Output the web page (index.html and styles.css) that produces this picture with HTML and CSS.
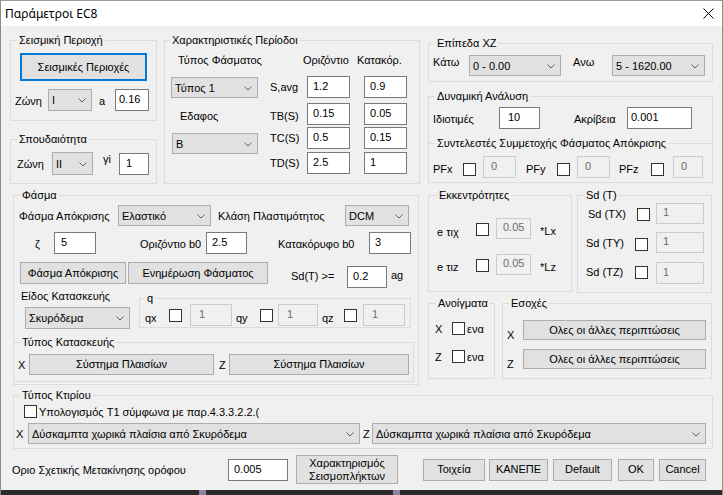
FILE: index.html
```html
<!DOCTYPE html>
<html lang="el">
<head>
<meta charset="utf-8">
<title>Παράμετροι EC8</title>
<link rel="stylesheet" href="styles.css">
</head>
<body>
<div class="window">
  <div class="titlebar">
    <span class="title">Παράμετροι EC8</span>
    <svg class="close" width="11" height="11" viewBox="0 0 11 11"><path d="M0.5 0.5 L10.5 10.5 M10.5 0.5 L0.5 10.5" stroke="#000" stroke-width="1" fill="none"/></svg>
  </div>
  <div class="body">
    <div class="main">
      <div class="left">
        <div class="toprow">
          <div class="colA">
            <div class="group g1">
              <span class="legend">Σεισμική Περιοχή</span>
              <button class="btn seismic">Σεισμικές Περιοχές</button>
              <div class="g1-row">
                <span class="lbl">Ζώνη</span>
                <div class="combo h22"><span>I</span><svg width="8" height="5" viewBox="0 0 8 5"><polyline points="0.5,0.5 4,4 7.5,0.5" fill="none" stroke="#606060"/></svg></div>
                <span class="lbl pl7">a</span>
                <div class="input pl3">0.16</div>
              </div>
            </div>
            <div class="group g2">
              <span class="legend">Σπουδαιότητα</span>
              <div class="g2-row">
                <span class="lbl">Ζώνη</span>
                <div class="combo h23"><span>II</span><svg width="8" height="5" viewBox="0 0 8 5"><polyline points="0.5,0.5 4,4 7.5,0.5" fill="none" stroke="#606060"/></svg></div>
                <span class="lbl gi">γi</span>
                <div class="input h23 pl6">1</div>
              </div>
            </div>
          </div>
          <div class="group g3">
            <span class="legend">Χαρακτηριστικές Περίοδοι</span>
            <div class="g3-left">
              <span class="lbl typos-lbl">Τύπος Φάσματος</span>
              <div class="combo typos-combo"><span>Τύπος 1</span><svg width="8" height="5" viewBox="0 0 8 5"><polyline points="0.5,0.5 4,4 7.5,0.5" fill="none" stroke="#606060"/></svg></div>
              <span class="lbl edafos-lbl">Εδαφος</span>
              <div class="combo edafos-combo"><span>B</span><svg width="8" height="5" viewBox="0 0 8 5"><polyline points="0.5,0.5 4,4 7.5,0.5" fill="none" stroke="#606060"/></svg></div>
            </div>
            <div class="g3-right">
              <div class="g3-head"><span class="h-oriz">Οριζόντιο</span><span>Κατακόρ.</span></div>
              <div class="prow pr1"><span class="lbl">S,avg</span><div class="input">1.2</div><div class="input">0.9</div></div>
              <div class="prow pr2"><span class="lbl">TB(S)</span><div class="input">0.15</div><div class="input">0.05</div></div>
              <div class="prow pr3"><span class="lbl">TC(S)</span><div class="input">0.5</div><div class="input">0.15</div></div>
              <div class="prow pr4"><span class="lbl">TD(S)</span><div class="input">2.5</div><div class="input">1</div></div>
            </div>
          </div>
        </div>
        <div class="group fasma">
          <span class="legend">Φάσμα</span>
          <div class="f-r1">
            <span class="lbl">Φάσμα Απόκρισης</span>
            <div class="combo"><span>Ελαστικό</span><svg width="8" height="5" viewBox="0 0 8 5"><polyline points="0.5,0.5 4,4 7.5,0.5" fill="none" stroke="#606060"/></svg></div>
            <span class="lbl pl7">Κλάση Πλαστιμότητος</span>
            <div class="combo"><span>DCM</span><svg width="8" height="5" viewBox="0 0 8 5"><polyline points="0.5,0.5 4,4 7.5,0.5" fill="none" stroke="#606060"/></svg></div>
          </div>
          <div class="f-r2">
            <span class="lbl zeta">ζ</span>
            <div class="input pl6">5</div>
            <span class="lbl oriz-b0">Οριζόντιο b0</span>
            <div class="input">2.5</div>
            <span class="lbl kat-b0">Κατακόρυφο b0</span>
            <div class="input">3</div>
          </div>
          <div class="f-r3">
            <button class="btn b-fasma">Φάσμα Απόκρισης</button>
            <button class="btn b-enim">Ενημέρωση Φάσματος</button>
            <span class="lbl sd-lbl">Sd(T) &gt;=</span>
            <div class="input sd-in">0.2</div>
            <span class="lbl ag-lbl">ag</span>
          </div>
          <div class="f-r4">
            <div class="f-r4-left">
              <span class="lbl eidos-lbl">Είδος Κατασκευής</span>
              <div class="combo h22 eidos-combo"><span>Σκυρόδεμα</span><svg width="8" height="5" viewBox="0 0 8 5"><polyline points="0.5,0.5 4,4 7.5,0.5" fill="none" stroke="#606060"/></svg></div>
            </div>
            <div class="group qgroup">
              <span class="legend">q</span>
              <div class="q-row">
                <span class="lbl">qx</span>
                <span class="cb"></span>
                <div class="input dis pl8 w42">1</div>
                <span class="lbl pl4">qy</span>
                <span class="cb"></span>
                <div class="input dis pl8 w40">1</div>
                <span class="lbl pl4">qz</span>
                <span class="cb"></span>
                <div class="input dis pl8 w42">1</div>
              </div>
            </div>
          </div>
          <div class="group tk-group">
            <span class="legend">Τύπος Κατασκευής</span>
            <div class="tk-row">
              <span class="lbl">X</span>
              <button class="btn">Σύστημα Πλαισίων</button>
              <span class="lbl pl5">Z</span>
              <button class="btn">Σύστημα Πλαισίων</button>
            </div>
          </div>
        </div>
      </div>

      <div class="right">
        <div class="group epipeda">
          <span class="legend">Επίπεδα XZ</span>
          <div class="ep-row">
            <span class="lbl">Κάτω</span>
            <div class="combo"><span>0 - 0.00</span><svg width="8" height="5" viewBox="0 0 8 5"><polyline points="0.5,0.5 4,4 7.5,0.5" fill="none" stroke="#606060"/></svg></div>
            <span class="lbl anw">Ανω</span>
            <div class="combo"><span>5 - 1620.00</span><svg width="8" height="5" viewBox="0 0 8 5"><polyline points="0.5,0.5 4,4 7.5,0.5" fill="none" stroke="#606060"/></svg></div>
          </div>
        </div>
        <div class="group dyn">
          <span class="legend">Δυναμική Ανάλυση</span>
          <div class="dyn-row">
            <span class="lbl">Ιδιοτιμές</span>
            <div class="input h23 pl8">10</div>
            <span class="lbl akr">Ακρίβεια</span>
            <div class="input h23 pl3">0.001</div>
          </div>
          <div class="group synt">
            <span class="legend">Συντελεστές Συμμετοχής Φάσματος Απόκρισης</span>
            <div class="pf-row">
              <span class="lbl">PFx</span>
              <span class="cb"></span>
              <div class="input dis w33">0</div>
              <span class="lbl pl10">PFy</span>
              <span class="cb"></span>
              <div class="input dis w33">0</div>
              <span class="lbl pl9">PFz</span>
              <span class="cb"></span>
              <div class="input dis w30">0</div>
            </div>
          </div>
        </div>
        <div class="row3">
          <div class="group ekk">
            <span class="legend ekk-legend">Εκκεντρότητες</span>
            <div class="e-row">
              <span class="lbl">e τιχ</span>
              <span class="cb"></span>
              <div class="input dis pl6 w35">0.05</div>
              <span class="lbl star">*Lx</span>
            </div>
            <div class="e-row e-row2">
              <span class="lbl">e τιz</span>
              <span class="cb"></span>
              <div class="input dis pl6 w35">0.05</div>
              <span class="lbl star">*Lz</span>
            </div>
          </div>
          <div class="group sdt">
            <span class="legend">Sd (T)</span>
            <div class="s-row sx">
              <span class="lbl">Sd (TX)</span>
              <span class="cb"></span>
              <div class="input dis pl6 w48">1</div>
            </div>
            <div class="s-row sy">
              <span class="lbl">Sd (TY)</span>
              <span class="cb"></span>
              <div class="input dis pl6 w48">1</div>
            </div>
            <div class="s-row sz">
              <span class="lbl">Sd (TZ)</span>
              <span class="cb"></span>
              <div class="input dis pl6 w48">1</div>
            </div>
          </div>
        </div>
        <div class="row4">
          <div class="group anoig">
            <span class="legend">Ανοίγματα</span>
            <div class="a-row"><span class="lbl ax">X</span><span class="cb"></span><span class="lbl ena">ενα</span></div>
            <div class="a-row a-row2"><span class="lbl ax">Z</span><span class="cb"></span><span class="lbl ena">ενα</span></div>
          </div>
          <div class="group esoxes">
            <span class="legend">Εσοχές</span>
            <div class="es-row"><span class="lbl">X</span><button class="btn">Ολες οι άλλες περιπτώσεις</button></div>
            <div class="es-row es-row2"><span class="lbl">Z</span><button class="btn">Ολες οι άλλες περιπτώσεις</button></div>
          </div>
        </div>
      </div>
    </div>

    <div class="group ktirio">
      <span class="legend">Τύπος Κτιρίου</span>
      <div class="k-r1">
        <span class="cb"></span>
        <span class="lbl k-text">Υπολογισμός T1 σύμφωνα με παρ.4.3.3.2.2.(</span>
      </div>
      <div class="k-r2">
        <span class="lbl">X</span>
        <div class="combo"><span>Δύσκαμπτα χωρικά πλαίσια από Σκυρόδεμα</span><svg width="8" height="5" viewBox="0 0 8 5"><polyline points="0.5,0.5 4,4 7.5,0.5" fill="none" stroke="#606060"/></svg></div>
        <span class="lbl pl3">Z</span>
        <div class="combo"><span>Δύσκαμπτα χωρικά πλαίσια από Σκυρόδεμα</span><svg width="8" height="5" viewBox="0 0 8 5"><polyline points="0.5,0.5 4,4 7.5,0.5" fill="none" stroke="#606060"/></svg></div>
      </div>
    </div>

    <div class="bottom">
      <span class="lbl orio">Οριο Σχετικής Μετακίνησης ορόφου</span>
      <div class="input h23 orio-in">0.005</div>
      <button class="btn b-xar">Χαρακτηρισμός<br>Σεισμοπλήκτων</button>
      <button class="btn b-toix">Τοιχεία</button>
      <button class="btn b-kan">ΚΑΝΕΠΕ</button>
      <button class="btn b-def">Default</button>
      <button class="btn b-ok">OK</button>
      <button class="btn b-can">Cancel</button>
    </div>
  </div>
  <div class="strip"><span class="patch p1"></span><span class="patch p2"></span></div>
</div>
</body>
</html>
```

FILE: styles.css
```css
* { box-sizing: border-box; margin: 0; padding: 0; }
html, body { margin: 0; background: #f0f0f0; }
body {
  font-family: "Liberation Sans", Arial, sans-serif;
  font-size: 11px;
  color: #000;
}
.window {
  width: 723px;
  height: 495px;
  overflow: hidden;
  background: #f0f0f0;
  border-left: 1px solid #8a8a8a;
  border-right: 1px solid #8a8a8a;
  display: flex;
  flex-direction: column;
}
.titlebar {
  flex: none;
  height: 26px;
  background: #fff;
  border-top: 1px solid #9a9a9a;
  display: flex;
  align-items: center;
  justify-content: space-between;
  padding-left: 4px;
}
.title {
  font-family: "Noto Sans", "Open Sans", sans-serif;
  font-size: 12px;
  line-height: 16px;
}
.close { margin-right: 8px; }
.body {
  flex: none;
  height: 464px;
  padding: 14px 9px 0 9px;
}
.strip {
  flex: none;
  height: 5px;
  background: #2b2b2b;
  display: flex;
}
.patch { width: 7px; height: 5px; background: #8a83a0; }
.p1 { margin-left: 198px; }
.p2 { margin-left: 187px; }

/* generic controls */
.lbl { line-height: 14px; white-space: nowrap; }
.pl3 { padding-left: 3px; }
.pl4 { padding-left: 4px; }
.pl5 { padding-left: 5px; }
.pl6 { padding-left: 6px; }
.pl7 { padding-left: 7px; }
.pl8 { padding-left: 8px; }
.pl9 { padding-left: 9px; }
.pl10 { padding-left: 10px; }

.group {
  position: relative;
  border: 1px solid #dcdcdc;
}
.legend {
  position: absolute;
  top: -8px;
  left: 6px;
  padding: 0 2px;
  line-height: 14px;
  background: #f0f0f0;
  white-space: nowrap;
}
.combo {
  height: 21px;
  background: #e1e1e1;
  border: 1px solid #adadad;
  display: flex;
  align-items: center;
  justify-content: space-between;
  padding: 0 5px 0 3px;
  white-space: nowrap;
  overflow: hidden;
}
.combo svg { flex: none; margin-top: 1px; }
.h22 { height: 22px; }
.h23 { height: 23px; }
.input {
  height: 22px;
  background: #fff;
  border: 1px solid #7a7a7a;
  padding: 0 0 2px 5px;
  display: flex;
  align-items: center;
  white-space: nowrap;
}
.input.pl3 { padding-left: 3px; }
.input.pl6 { padding-left: 6px; }
.input.pl8 { padding-left: 8px; }
.input.dis {
  background: #f0f0f0;
  border-color: #cccccc;
  color: #6d6d6d;
  padding-bottom: 3px;
}
.input.dis:not(.pl6):not(.pl8) { padding-left: 7px; }
.w30 { width: 30px; }
.w33 { width: 33px; }
.w35 { width: 35px; }
.w40 { width: 40px; }
.w42 { width: 42px; }
.w48 { width: 48px; }
.btn {
  font: inherit;
  color: #000;
  background: #e1e1e1;
  border: 1px solid #adadad;
  display: flex;
  align-items: center;
  justify-content: center;
  text-align: center;
  line-height: 13px;
  white-space: nowrap;
}
.cb {
  display: block;
  width: 13px;
  height: 13px;
  border: 1px solid #333;
  background: #fff;
}

/* layout */
.main { display: flex; }
.left { width: 410px; flex: none; }
.right { width: 285px; flex: none; margin-left: 8px; margin-top: 3px; }
.toprow { display: flex; }
.colA { width: 147px; flex: none; }

/* Σεισμική Περιοχή */
.g1 { height: 81px; padding: 12px 0 0 4px; }
.seismic {
  margin-left: 5px;
  width: 127px;
  height: 28px;
  border: 2px solid #0078d7;
}
.g1-row {
  display: grid;
  grid-template-columns: 33px 44px 23px 34px;
  height: 22px;
  margin-top: 8px;
  align-items: center;
}
.g1-row .lbl { padding-top: 2px; }

/* Σπουδαιότητα */
.g2 { margin-top: 18px; height: 45px; padding: 12px 0 0 6px; }
.g2-row {
  display: grid;
  grid-template-columns: 35px 41px 26px 30px;
  height: 23px;
  align-items: center;
}
.g2-row .gi { align-self: start; padding-left: 10px; margin-top: 0; }

/* Χαρακτηριστικές Περίοδοι */
.g3 {
  margin-left: 7px;
  width: 256px;
  height: 144px;
  display: flex;
  padding: 12px 0 0 6px;
}
.g3 .legend { left: 5px; }
.g3-left {
  width: 87px;
  flex: none;
  display: flex;
  flex-direction: column;
  align-items: flex-start;
}
.typos-lbl { margin-left: 7px; }
.typos-combo { margin-top: 10px; width: 87px; }
.edafos-lbl { margin-left: 9px; margin-top: 11px; }
.edafos-combo { margin-top: 10px; margin-left: 1px; width: 86px; }
.g3-right { margin-left: 12px; }
.g3-head { display: flex; padding-left: 33px; line-height: 14px; white-space: nowrap; }
.h-oriz { width: 54px; }
.prow {
  display: grid;
  grid-template-columns: 37px 57px 43px;
  height: 22px;
  align-items: center;
}
.prow .input { width: 43px; }
.pr1 { margin-top: 9px; }
.pr2 { margin-top: 5px; }
.pr2 .lbl { padding-top: 3px; }
.pr3 { margin-top: 2px; }
.pr4 { margin-top: 3px; }

/* Φάσμα */
.fasma {
  margin-left: 3px;
  margin-top: 11px;
  width: 406px;
  height: 190px;
  padding: 9px 0 0 5px;
}
.f-r1 {
  display: grid;
  grid-template-columns: 99px 93px 134px 64px;
  height: 21px;
  align-items: center;
}
.f-r1 .lbl { padding-top: 1px; }
.f-r2 {
  display: grid;
  grid-template-columns: 35px 42px 110px 41px 122px 42px;
  height: 22px;
  margin-top: 6px;
  align-items: center;
}
.f-r2 .lbl { padding-top: 1px; }
.zeta { padding-left: 16px; }
.oriz-b0 { padding-left: 44px; }
.kat-b0 { padding-left: 31px; }
.f-r3 {
  display: flex;
  align-items: flex-start;
  height: 26px;
  margin-top: 8px;
}
.b-fasma { margin-left: 1px; width: 106px; height: 22px; }
.b-enim { margin-left: 2px; width: 140px; height: 22px; }
.sd-lbl { margin-left: 23px; width: 56px; margin-top: 7px; }
.sd-in { width: 40px; margin-top: 4px; }
.ag-lbl { margin-left: 4px; margin-top: 6px; }
.f-r4 { display: flex; height: 41px; }
.f-r4-left {
  width: 120px;
  flex: none;
  display: flex;
  flex-direction: column;
  align-items: flex-start;
}
.eidos-lbl { margin-left: 2px; margin-top: 1px; }
.eidos-combo { margin-top: 4px; margin-left: 6px; width: 105px; }
.qgroup {
  margin-top: 10px;
  width: 272px;
  height: 30px;
  padding: 5px 0 0 5px;
}
.qgroup .legend { left: 5px; }
.q-row {
  display: grid;
  grid-template-columns: 24px 13px 50px 28px 13px 45px 26px 13px 48px;
  height: 22px;
  align-items: center;
}
.q-row .input { justify-self: end; }
.q-row .lbl { padding-top: 5px; }
.tk-group {
  margin-top: 13px;
  margin-left: -6px;
  width: 401px;
  height: 40px;
  padding: 11px 0 0 4px;
}
.tk-row {
  display: grid;
  grid-template-columns: 11px 185px 15px 180px;
  height: 21px;
  align-items: center;
}
.tk-row .btn { height: 21px; }

/* Επίπεδα XZ */
.epipeda { height: 39px; padding: 11px 0 0 4px; }
.ep-row {
  display: grid;
  grid-template-columns: 36px 92px 51px 93px;
  height: 21px;
}
.ep-row .lbl { align-self: start; }
.ep-row .anw { padding-left: 12px; }

/* Δυναμική Ανάλυση */
.dyn { margin-top: 14px; height: 87px; padding: 9px 0 0 4px; }
.dyn-row {
  display: grid;
  grid-template-columns: 66px 41px 87px 65px;
  height: 23px;
  align-items: center;
}
.dyn-row .lbl { padding-top: 2px; }
.dyn-row .akr { padding-left: 34px; }
.synt {
  margin-top: 14px;
  margin-left: -5px;
  width: 285px;
  height: 40px;
  padding: 12px 0 0 4px;
}
.pf-row {
  display: grid;
  grid-template-columns: 30px 13px 40px 41px 13px 40px 41px 13px 39px;
  height: 22px;
  align-items: start;
}
.pf-row .input { justify-self: end; }
.pf-row .cb { margin-top: 7px; }
.pf-row .lbl { margin-top: 6px; }

/* Εκκεντρότητες */
.row3 { display: flex; gap: 5px; margin-top: 12px; }
.ekk { width: 144px; height: 97px; padding: 22px 0 0 8px; }
.ekk .legend { left: 8px; }
.e-row {
  display: grid;
  grid-template-columns: 39px 13px 42px auto;
  height: 21px;
  align-items: start;
}
.e-row .input { justify-self: end; height: 21px; }
.e-row .cb { margin-top: 5px; }
.e-row .lbl { margin-top: 7px; }
.e-row .star { padding-left: 9px; margin-top: 6px; }
.e-row2 { margin-top: 15px; }
.e-row2 .lbl { margin-top: 6px; }

/* Sd (T) */
.sdt { width: 135px; height: 98px; padding: 7px 0 0 8px; }
.sdt .legend { left: 6px; }
.s-row {
  display: grid;
  grid-template-columns: 49px 13px 56px;
  height: 21px;
  align-items: start;
}
.s-row .input { justify-self: end; height: 21px; }
.sx .lbl { padding-left: 2px; margin-top: 4px; }
.sx .cb { margin-left: 2px; margin-top: 5px; }
.sy { margin-top: 8px; }
.sy .lbl { margin-top: 4px; }
.sy .cb { margin-top: 6px; }
.sz { margin-top: 9px; height: 22px; }
.sz .input { height: 22px; }
.sz .lbl { margin-top: 3px; }
.sz .cb { margin-top: 4px; }

/* Ανοίγματα */
.row4 { display: flex; gap: 7px; margin-top: 10px; }
.anoig { width: 67px; height: 76px; padding: 18px 0 0 6px; }
.anoig .legend { left: 7px; }
.a-row { display: flex; align-items: center; height: 13px; }
.ax { width: 17px; }
.ena { padding-left: 2px; }
.a-row2 { margin-top: 15px; }

/* Εσοχές */
.esoxes { width: 210px; height: 76px; padding: 16px 0 0 4px; }
.es-row {
  display: grid;
  grid-template-columns: 16px 183px;
  height: 20px;
}
.es-row .lbl { margin-top: 8px; }
.es-row .btn { height: 20px; }
.es-row2 { margin-top: 9px; }

/* Τύπος Κτιρίου */
.ktirio {
  margin-left: 3px;
  margin-top: 10px;
  width: 700px;
  height: 54px;
  padding: 9px 0 0 10px;
}
.k-r1 { display: flex; align-items: center; height: 13px; }
.k-text { margin-left: 2px; }
.k-r2 {
  display: grid;
  grid-template-columns: 12px 332px 12px 334px;
  height: 21px;
  margin-top: 5px;
  margin-left: -8px;
  align-items: center;
}

/* bottom row */
.bottom {
  display: flex;
  align-items: center;
  height: 29px;
  margin-top: 6px;
  margin-left: 2px;
}
.orio { width: 216px; }
.orio-in { width: 60px; }
.b-xar { margin-left: 8px; width: 102px; height: 29px; }
.b-toix { margin-left: 25px; width: 62px; height: 22px; }
.b-kan { margin-left: 4px; width: 59px; height: 22px; }
.b-def { margin-left: 5px; width: 59px; height: 22px; }
.b-ok { margin-left: 6px; width: 36px; height: 22px; }
.b-can { margin-left: 5px; width: 47px; height: 22px; }
```
